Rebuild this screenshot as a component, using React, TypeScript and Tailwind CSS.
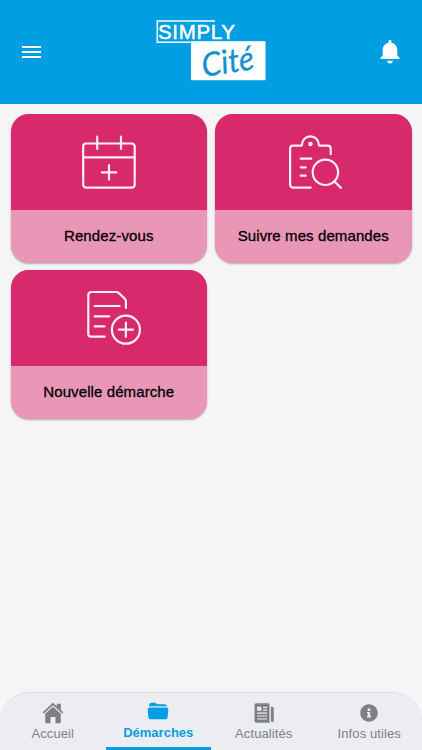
import React from 'react';
import { IoFolderOpen } from 'react-icons/io5';
import { FaInfoCircle } from 'react-icons/fa';

const CalendarIcon = () => (
  <>
    <path d="M7.2 11.5h45.5a3 3 0 0 1 3 3v38.2a3 3 0 0 1-3 3H7.2a3 3 0 0 1-3-3V14.5a3 3 0 0 1 3-3Z" />
    <path d="M4.2 25.4h51.5M18.2 4.5V17M42 4.5V17M30 33.2v14.4M22.8 40.4h14.4" />
  </>
);

const FollowIcon = () => (
  <>
    <path d="M27.7 55.7H10.1a3 3 0 0 1-3-3v-36a3 3 0 0 1 3-3h7.9c.6 0 1-.4 1-1a8.4 8.4 0 0 1 16.8 0c0 .6.4 1 1 1h7.900a3 3 0 0 1 3 3v5.5" />
    <circle cx="27.4" cy="12" r="1.2" fill="currentColor" />
    <path d="M17.7 26.7h10.6M17.7 35.3h5M17.7 43.7h5" />
    <circle cx="42.4" cy="40.3" r="12.7" />
    <path d="m51.3 49.2 6.6 6.6" />
  </>
);

const NewRequestIcon = () => (
  <>
    <path d="M25.6 48.7H12.3a3 3 0 0 1-3-3V7a3 3 0 0 1 3-3h24.9a4 4 0 0 1 2.7 1.1l5.9 5.6a4 4 0 0 1 1.1 2.7V20" />
    <path d="M15.6 18h25M15.6 28.3h14.7M15.6 38.3h10" />
    <circle cx="46.9" cy="41.7" r="14" />
    <path d="M46.9 34.6v14.2M39.8 41.7H54" />
  </>
);

const BellIcon = () => (
  <svg width="20" height="24" viewBox="0 0 20 24" fill="currentColor">
    <path d="M10 0c.9 0 1.4.6 1.4 1.4v1.3c3.5.7 5.9 3.5 5.9 7.2v5.6l2.2 2.2v1.2H.5v-1.2l2.2-2.2V9.9c0-3.7 2.4-6.5 5.9-7.2V1.4C8.6.6 9.1 0 10 0Z" />
    <path d="M7.3 20.7h5.4a2.7 2.7 0 0 1-5.4 0Z" />
  </svg>
);

const HomeIcon = () => (
  <svg width="22" height="22" viewBox="0 0 22 22" fill="currentColor">
    <path d="M11 .8 14.8 4.3V1.8h4v6.1l2.6 2.4-1.2 1.3L11 3.2l-9.2 8.4-1.2-1.3Z" />
    <path d="M11 4.7 18.8 11.8v8.5a1 1 0 0 1-1 1h-4.3v-6.4h-5v6.4H4.2a1 1 0 0 1-1-1v-8.5Z" />
  </svg>
);

const NewsIcon = () => (
  <svg width="22" height="22" viewBox="0 0 22 22">
    <path d="M3 1.2h12a1.5 1.5 0 0 1 1.5 1.5v16c0 1 .3 1.6.8 2.1H3.5a2 2 0 0 1-2-2V2.7A1.5 1.5 0 0 1 3 1.2Z" fill="currentColor" />
    <path d="M17.9 4.8h1.4a1.5 1.5 0 0 1 1.5 1.5v12.6a1.5 1.5 0 0 1-2.9 0Z" fill="currentColor" />
    <path d="M4.1 4.7h4.2v4H4.1Z" fill="#ebedf3" />
    <path d="M10 5.3h4M10 8.1h4M4.1 11.1H14M4.1 14h9.9M4.1 17h9.9" stroke="#ebedf3" strokeWidth="1.2" />
  </svg>
);

const FolderIcon = () => <IoFolderOpen size={22} />;

const InfoIcon = () => <FaInfoCircle size={18} />;

const services = [
  { label: 'Rendez-vous', icon: CalendarIcon },
  { label: 'Suivre mes demandes', icon: FollowIcon },
  { label: 'Nouvelle démarche', icon: NewRequestIcon },
];

const tabs = [
  { label: 'Accueil', icon: HomeIcon, active: false },
  { label: 'Démarches', icon: FolderIcon, active: true },
  { label: 'Actualités', icon: NewsIcon, active: false },
  { label: 'Infos utiles', icon: InfoIcon, active: false },
];

const Logo = () => (
  <svg width="110" height="62" viewBox="0 0 110 62" className="overflow-visible" aria-label="Simply Cité">
    <path d="M59 2H1.3v21.3H36" fill="none" stroke="#fff" strokeWidth="1.5" />
    <text x="2" y="20" textLength="77" lengthAdjust="spacing" fontSize="20.5" fill="#fff" stroke="#fff" strokeWidth="0.5" className="font-['Liberation_Sans',sans-serif]">
      SIMPLY
    </text>
    <rect x="35" y="22.2" width="74.5" height="39" fill="#fff" />
    <text transform="translate(47.5 58) rotate(-9) scale(.95 1)" fontSize="33" fill="#1492d0" stroke="#1492d0" strokeWidth="0.3" className="font-['Lato',sans-serif] italic">
      Cité
    </text>
  </svg>
);

const App: React.FC = () => {
  return (
    <div className="flex h-[750px] w-[422px] flex-col overflow-hidden bg-[#f5f5f5] font-['Liberation_Sans',Arial,sans-serif]">
      <header className="flex h-[104px] shrink-0 items-center justify-between bg-[#009ee2] px-[22px] text-white">
        <button aria-label="Menu" className="flex w-[19px] flex-col gap-[3px]">
          <span className="h-[2px] w-full bg-white" />
          <span className="h-[2px] w-full bg-white" />
          <span className="h-[2px] w-full bg-white" />
        </button>
        <div className="-mt-1 ml-px">
          <Logo />
        </div>
        <button aria-label="Notifications">
          <BellIcon />
        </button>
      </header>

      <main className="grid flex-1 grid-cols-2 content-start gap-x-2 gap-y-[7.5px] px-[10.5px] pt-[10px]">
        {services.map((service) => (
          <button
            key={service.label}
            className="flex h-[148.5px] flex-col overflow-hidden rounded-[18px] bg-[#ea96b7] shadow-[0_1px_2px_rgba(0,0,0,0.3)]"
          >
            <div className="flex h-24 w-full items-center justify-center bg-[#d7296c] text-[#ffeef5]">
              <svg
                width="60"
                height="60"
                viewBox="0 0 60 60"
                fill="none"
                stroke="currentColor"
                strokeWidth="2.2"
                strokeLinecap="round"
                strokeLinejoin="round"
                className="overflow-visible"
              >
                <service.icon />
              </svg>
            </div>
            <div className="flex w-full flex-1 items-center justify-center text-[15px] tracking-[0.1px] text-black [-webkit-text-stroke:0.3px_black]">
              {service.label}
            </div>
          </button>
        ))}
      </main>

      <nav className="grid h-[58px] shrink-0 grid-cols-4 rounded-t-[30px] border-t border-[#dcdde3] bg-[#ebedf3]">
        {tabs.map((tab) => (
          <button
            key={tab.label}
            className={`flex flex-col items-center border-b-[3px] ${
              tab.active
                ? 'border-[#009ee2] pt-[7px] text-[13px] font-bold text-[#009ee2]'
                : 'border-transparent pt-[9px] text-[13px] tracking-[0.1px] text-[#808084]'
            }`}
          >
            <span className="flex h-[22px] items-center">
              <tab.icon />
            </span>
            <span className={tab.active ? 'leading-[21px]' : 'leading-5'}>{tab.label}</span>
          </button>
        ))}
      </nav>
    </div>
  );
};

export default App;
